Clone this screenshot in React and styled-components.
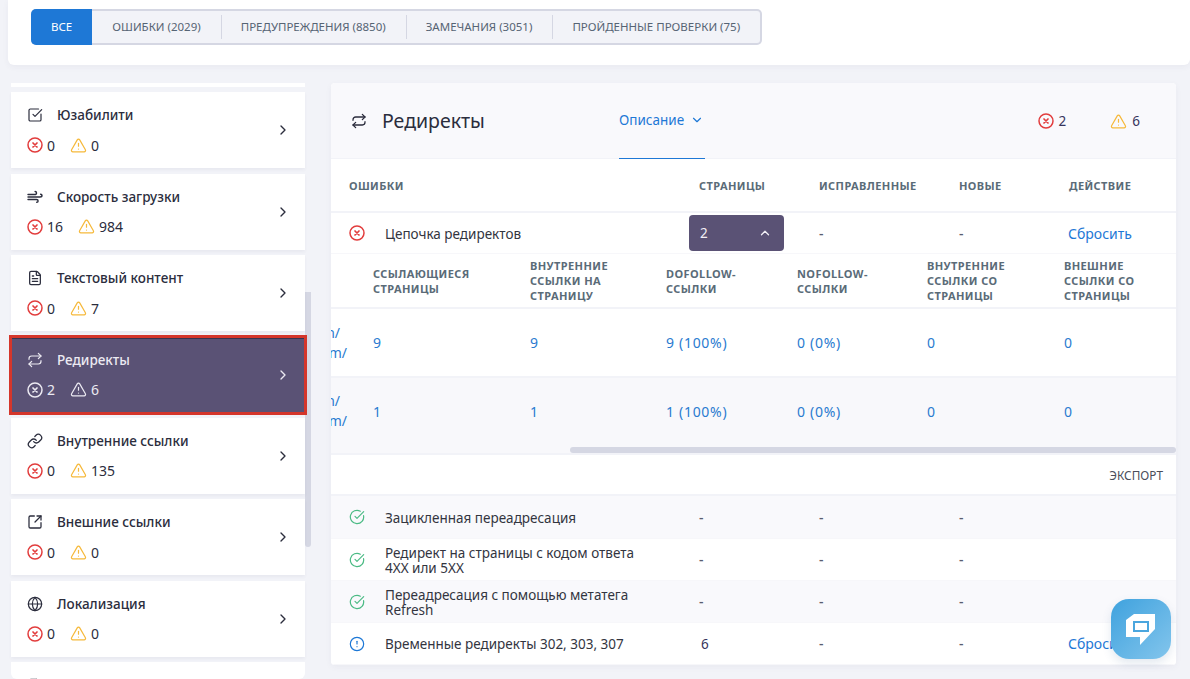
import React from 'react';
import styled, { createGlobalStyle } from 'styled-components';
import {
  SquareCheckBig,
  FileText,
  Repeat,
  Link as LinkIcon,
  SquareArrowOutUpRight,
  Globe,
  ChevronRight,
  ChevronDown,
  ChevronUp,
  TriangleAlert,
  CircleCheckBig,
  CircleAlert,
} from 'lucide-react';

const GlobalStyle = createGlobalStyle`
  html, body {
    margin: 0;
    height: 100%;
    overflow: hidden;
    background: #f2f3f8;
    font-family: "Noto Sans", "Open Sans", sans-serif;
    color: #2b2d3d;
  }
  * { box-sizing: border-box; }
`;

const Page = styled.div`
  height: 679px;
  overflow: hidden;
  padding-left: 8px;
`;

const TopCard = styled.div`
  height: 65px;
  background: #fff;
  border-radius: 0 0 6px 6px;
  padding: 9px 0 0 23px;
  box-shadow: 0 2px 6px rgba(60, 60, 100, 0.05);
`;

const Tabs = styled.div`
  display: inline-flex;
  height: 36px;
  background: #f2f3f8;
  border: 2px solid #d5d7e3;
  border-left: 0;
  border-radius: 5px;
`;

const Tab = styled.div`
  display: flex;
  align-items: center;
  height: 36px;
  margin-top: -2px;
  padding: 0 20px 1px;
  font-size: 11.5px;
  text-transform: uppercase;
  white-space: nowrap;
  color: ${(p) => (p.$active ? '#fff' : '#566474')};
  background: ${(p) => (p.$active ? '#1e78d6' : 'transparent')};
  border-radius: ${(p) => (p.$active ? '5px 0 0 5px' : '0')};
  position: relative;

  &:nth-child(n + 3)::before {
    content: '';
    position: absolute;
    left: 0;
    top: 6px;
    bottom: 6px;
    width: 1px;
    background: #d5d7e3;
  }
`;

const Columns = styled.div`
  display: flex;
  margin-top: 18px;
  padding: 0 14px 0 3px;
  gap: 20px;
  height: 596px;
`;

const Sidebar = styled.div`
  display: flex;
  flex: 0 0 300px;
`;

const CardList = styled.div`
  display: flex;
  flex-direction: column;
  gap: 5.4px;
  width: 294px;
`;

const StubCard = styled.div`
  flex: 0 0 ${(p) => p.$height}px;
  background: #fff;
  padding: ${(p) => (p.$last ? '15px 0 0 16px' : '0')};
  overflow: hidden;
  border-radius: ${(p) => (p.$last ? '0 0 6px 6px' : '0')};
  color: #3a3c4c;
`;

const Card = styled.div`
  position: relative;
  flex: 0 0 76px;
  display: flex;
  align-items: center;
  justify-content: space-between;
  padding: 0 14px 0 16px;
  background: ${(p) => (p.$active ? '#5a5275' : '#fff')};
  color: ${(p) => (p.$active ? '#eceaf2' : '#2b2d3d')};
  box-shadow: 0 2px 3px rgba(60, 60, 100, 0.06);
  ${(p) => p.$active && `
    outline: 3px solid #d4362b;
    outline-offset: -1px;
    box-shadow: inset 0 2px 0 #38334f;
    z-index: 1;
  `}
`;

const CardTitle = styled.div`
  display: flex;
  align-items: center;
  gap: 14px;
  height: 20px;
  font-size: 13.5px;
  font-weight: 500;
`;

const Counts = styled.div`
  display: flex;
  align-items: center;
  gap: 4px;
  height: 20px;
  margin-top: 10px;
  font-size: 14px;
`;

const Count = styled.span`
  margin-right: 11px;
`;

const ScrollThumb = styled.div`
  flex: 0 0 6px;
  height: 255px;
  margin-top: 209px;
  background: #d5d7e3;
  border-radius: 0 0 3px 3px;
`;

const Panel = styled.div`
  flex: 1;
  height: 582px;
  background: #fff;
  border-radius: 4px;
  overflow: hidden;
  box-shadow: 0 2px 6px rgba(60, 60, 100, 0.05);
`;

const PanelHead = styled.div`
  display: flex;
  height: 75px;
  padding: 0 0 0 20px;
  background: #f9f9fc;
`;

const PanelTitle = styled.div`
  flex: 0 0 268px;
  display: flex;
  align-items: center;
  gap: 15px;
  font-size: 19.5px;
  height: 76px;

  span {
    margin-top: -1px;
  }
`;

const DescriptionTab = styled.div`
  flex: 0 0 86px;
  display: flex;
  align-items: center;
  gap: 6px;
  height: 76px;
  padding-bottom: 1px;
  font-size: 13.5px;
  color: #1e78d6;
  border-bottom: 1px solid #1e78d6;
`;

const HeadCounts = styled.div`
  margin-left: auto;
  display: flex;
  align-items: center;
  height: 76px;
  padding-right: 36px;
  gap: 5px;
  font-size: 13.5px;
  color: #37355c;

  span + svg {
    margin-left: 39px;
  }
`;

const mainColumns = '350px 120px 140px 110px 1fr';

const TableHead = styled.div`
  display: grid;
  grid-template-columns: ${mainColumns};
  align-items: center;
  height: 55px;
  padding-left: 18px;
  border-top: 1px solid #f2f3f8;
  border-bottom: 2px solid #f2f3f8;
`;

const HeadCell = styled.div`
  font-size: 11px;
  font-weight: 700;
  line-height: 15px;
  letter-spacing: 0.4px;
  text-transform: uppercase;
  color: #5a6b78;
`;

const NestedHeadCell = styled(HeadCell)`
  max-width: 110px;
`;

const Row = styled.div`
  display: grid;
  grid-template-columns: ${mainColumns};
  align-items: center;
  height: ${(p) => p.$height}px;
  padding-left: 18px;
  background: ${(p) => (p.$shaded ? '#f9f9fc' : '#fff')};
  border-bottom: 1px solid #f7f7fa;
  font-size: 13.5px;
`;

const NameCell = styled.div`
  display: flex;
  align-items: center;
  gap: 20px;
  line-height: 15px;
  color: #33353f;

  span {
    padding-top: 2px;
  }
`;

const Dash = styled.div`
  color: #5a5d6e;
  font-size: 14px;
  font-weight: 500;
`;

const Number = styled.div`
  padding-left: 2px;
  color: #37355c;
`;

const ActionLink = styled.a`
  margin-left: -1px;
  color: #1e78d6;
  font-size: 14px;
`;

const PagesButton = styled.div`
  display: flex;
  align-items: center;
  justify-content: space-between;
  width: 95px;
  height: 36px;
  margin-left: -10px;
  padding: 0 12px 0 11px;
  background: #5a5275;
  color: #f1eff5;
  border-radius: 4px;
`;

const nestedColumns = '42px 157px 136px 131px 130px 137px 1fr';

const NestedBlock = styled.div`
  position: relative;
`;

const NestedHead = styled.div`
  display: grid;
  grid-template-columns: ${nestedColumns};
  align-items: center;
  height: 55px;
  border-bottom: 2px solid #f2f3f8;
`;

const NestedRow = styled.div`
  display: grid;
  grid-template-columns: ${nestedColumns};
  align-items: center;
  height: ${(p) => p.$height}px;
  padding-bottom: ${(p) => (p.$shaded ? '9px' : '0')};
  background: ${(p) => (p.$shaded ? '#f8f8fb' : '#fff')};
  border-bottom: 2px solid #f2f3f8;
  font-size: 14px;
  letter-spacing: 0.7px;
  color: #2a7bd0;
`;

const CutUrl = styled.div`
  overflow: hidden;
  line-height: 20px;
  letter-spacing: 0;
`;

const CutLine = styled.div`
  display: flex;
  justify-content: flex-end;
  padding-right: ${(p) => p.$end}px;
  white-space: nowrap;
`;

const HorizontalScroll = styled.div`
  position: absolute;
  left: 239px;
  right: 0;
  bottom: 2px;
  height: 6px;
  background: #d5d7e3;
  border-radius: 3px;
`;

const ExportRow = styled.div`
  display: flex;
  align-items: center;
  justify-content: flex-end;
  height: 41px;
  padding-right: 13px;
  border-bottom: 2px solid #f2f3f8;
  font-size: 11.8px;
  color: #4a4d5a;
`;

const ChatButton = styled.div`
  position: fixed;
  left: 1111px;
  top: 599px;
  width: 60px;
  height: 60px;
  display: flex;
  align-items: center;
  justify-content: center;
  border-radius: 18px;
  background: linear-gradient(135deg, #3fa2de, #83c5ec);
  box-shadow: 0 4px 10px rgba(60, 100, 150, 0.15);
`;

const CrossCircle = ({ size = 16, color = '#e23d3d' }) => (
  <svg width={size} height={size} viewBox="0 0 16 16" fill="none" stroke={color} strokeLinecap="round">
    <circle cx="8" cy="8" r="7" strokeWidth="1.5" />
    <path d="M6 6l4 4M10 6l-4 4" strokeWidth="1.7" />
  </svg>
);

const WindLines = () => (
  <svg width="16" height="16" viewBox="0 0 16 16" fill="none" stroke="currentColor" strokeWidth="1.4" strokeLinecap="round">
    <path d="M1 5.5h6.5c1.2 0 2-.7 2-1.6 0-.9-.7-1.4-1.4-1.4" />
    <path d="M1 8h12c1.2 0 2-.6 2-1.5 0-.8-.7-1.3-1.4-1.3" />
    <path d="M1 10.5h8.5c1 0 1.6.6 1.6 1.4 0 .8-.6 1.4-1.4 1.4" />
  </svg>
);

const sections = [
  { title: 'Юзабилити', icon: <SquareCheckBig size={16} strokeWidth={1.8} />, errors: 0, warnings: 0 },
  { title: 'Скорость загрузки', icon: <WindLines />, errors: 16, warnings: 984 },
  { title: 'Текстовый контент', icon: <FileText size={16} strokeWidth={1.9} />, errors: 0, warnings: 7 },
  { title: 'Редиректы', icon: <Repeat size={16} strokeWidth={1.8} />, errors: 2, warnings: 6, active: true },
  { title: 'Внутренние ссылки', icon: <LinkIcon size={16} strokeWidth={1.9} />, errors: 0, warnings: 135 },
  { title: 'Внешние ссылки', icon: <SquareArrowOutUpRight size={16} strokeWidth={1.9} />, errors: 0, warnings: 0 },
  { title: 'Локализация', icon: <Globe size={16} strokeWidth={1.8} />, errors: 0, warnings: 0 },
];

const tabs = ['Все', 'Ошибки (2029)', 'Предупреждения (8850)', 'Замечания (3051)', 'Пройденные проверки (75)'];

const nestedHead = [
  'Ссылающиеся страницы',
  'Внутренние ссылки на страницу',
  'Dofollow-ссылки',
  'Nofollow-ссылки',
  'Внутренние ссылки со страницы',
  'Внешние ссылки со страницы',
];

const SectionCard = ({ title, icon, errors, warnings, active }) => (
  <Card $active={active}>
    <div>
      <CardTitle>
        {icon}
        {title}
      </CardTitle>
      <Counts>
        <CrossCircle color={active ? '#eceaf2' : '#e23d3d'} />
        <Count>{errors}</Count>
        <TriangleAlert size={17} strokeWidth={1.7} color={active ? '#eceaf2' : '#f6b93b'} />
        <Count>{warnings}</Count>
      </Counts>
    </div>
    <ChevronRight size={16} strokeWidth={2} />
  </Card>
);

const PassedRow = ({ name, shaded, height }) => (
  <Row $height={height} $shaded={shaded}>
    <NameCell>
      <CircleCheckBig size={16} strokeWidth={1.8} color="#4cbb85" />
      <span>{name}</span>
    </NameCell>
    <Dash>-</Dash>
    <Dash>-</Dash>
    <Dash>-</Dash>
  </Row>
);

const UrlTail = () => (
  <CutUrl>
    <CutLine $end={33}>n/</CutLine>
    <CutLine $end={26}>m/</CutLine>
  </CutUrl>
);

export default function App() {
  return (
    <Page>
      <GlobalStyle />
      <TopCard>
        <Tabs>
          {tabs.map((tab, i) => (
            <Tab key={tab} $active={i === 0}>{tab}</Tab>
          ))}
        </Tabs>
      </TopCard>
      <Columns>
        <Sidebar>
          <CardList>
            <StubCard $height={4} />
            {sections.map((section) => (
              <SectionCard key={section.title} {...section} />
            ))}
            <StubCard $height={17} $last>
              <FileText size={16} strokeWidth={1.9} />
            </StubCard>
          </CardList>
          <ScrollThumb />
        </Sidebar>
        <Panel>
          <PanelHead>
            <PanelTitle>
              <Repeat size={16} strokeWidth={1.9} />
              <span>Редиректы</span>
            </PanelTitle>
            <DescriptionTab>
              Описание
              <ChevronDown size={14} strokeWidth={2} />
            </DescriptionTab>
            <HeadCounts>
              <CrossCircle />
              <span>2</span>
              <TriangleAlert size={17} strokeWidth={1.7} color="#f6b93b" />
              <span>6</span>
            </HeadCounts>
          </PanelHead>
          <TableHead>
            <HeadCell>Ошибки</HeadCell>
            <HeadCell>Страницы</HeadCell>
            <HeadCell>Исправленные</HeadCell>
            <HeadCell>Новые</HeadCell>
            <HeadCell>Действие</HeadCell>
          </TableHead>
          <Row $height={41}>
            <NameCell>
              <CrossCircle />
              <span>Цепочка редиректов</span>
            </NameCell>
            <PagesButton>
              2
              <ChevronUp size={14} strokeWidth={2.2} />
            </PagesButton>
            <Dash>-</Dash>
            <Dash>-</Dash>
            <ActionLink>Сбросить</ActionLink>
          </Row>
          <NestedBlock>
            <NestedHead>
              <span />
              {nestedHead.map((title) => (
                <NestedHeadCell key={title}>{title}</NestedHeadCell>
              ))}
            </NestedHead>
            <NestedRow $height={69}>
              <UrlTail />
              <div>9</div>
              <div>9</div>
              <div>9 (100%)</div>
              <div>0 (0%)</div>
              <div>0</div>
              <div>0</div>
            </NestedRow>
            <NestedRow $height={77} $shaded>
              <UrlTail />
              <div>1</div>
              <div>1</div>
              <div>1 (100%)</div>
              <div>0 (0%)</div>
              <div>0</div>
              <div>0</div>
            </NestedRow>
            <HorizontalScroll />
          </NestedBlock>
          <ExportRow>ЭКСПОРТ</ExportRow>
          <PassedRow name="Зацикленная переадресация" shaded height={43} />
          <PassedRow name={<>Редирект на страницы с кодом ответа<br />4XX или 5XX</>} height={42} />
          <PassedRow name={<>Переадресация с помощью метатега<br />Refresh</>} shaded height={42} />
          <Row $height={42}>
            <NameCell>
              <CircleAlert size={16} strokeWidth={1.8} color="#1e78d6" />
              <span>Временные редиректы 302, 303, 307</span>
            </NameCell>
            <Number>6</Number>
            <Dash>-</Dash>
            <Dash>-</Dash>
            <ActionLink>Сбросить</ActionLink>
          </Row>
        </Panel>
      </Columns>
      <ChatButton>
        <svg width="30" height="32" viewBox="0 0 30 32">
          <path d="M0 7l8-6h21v15L14 32v-8H0z" fill="#fff" />
          <rect x="8" y="9" width="14" height="9" fill="none" stroke="#4ba6de" strokeWidth="2" />
        </svg>
      </ChatButton>
    </Page>
  );
}
